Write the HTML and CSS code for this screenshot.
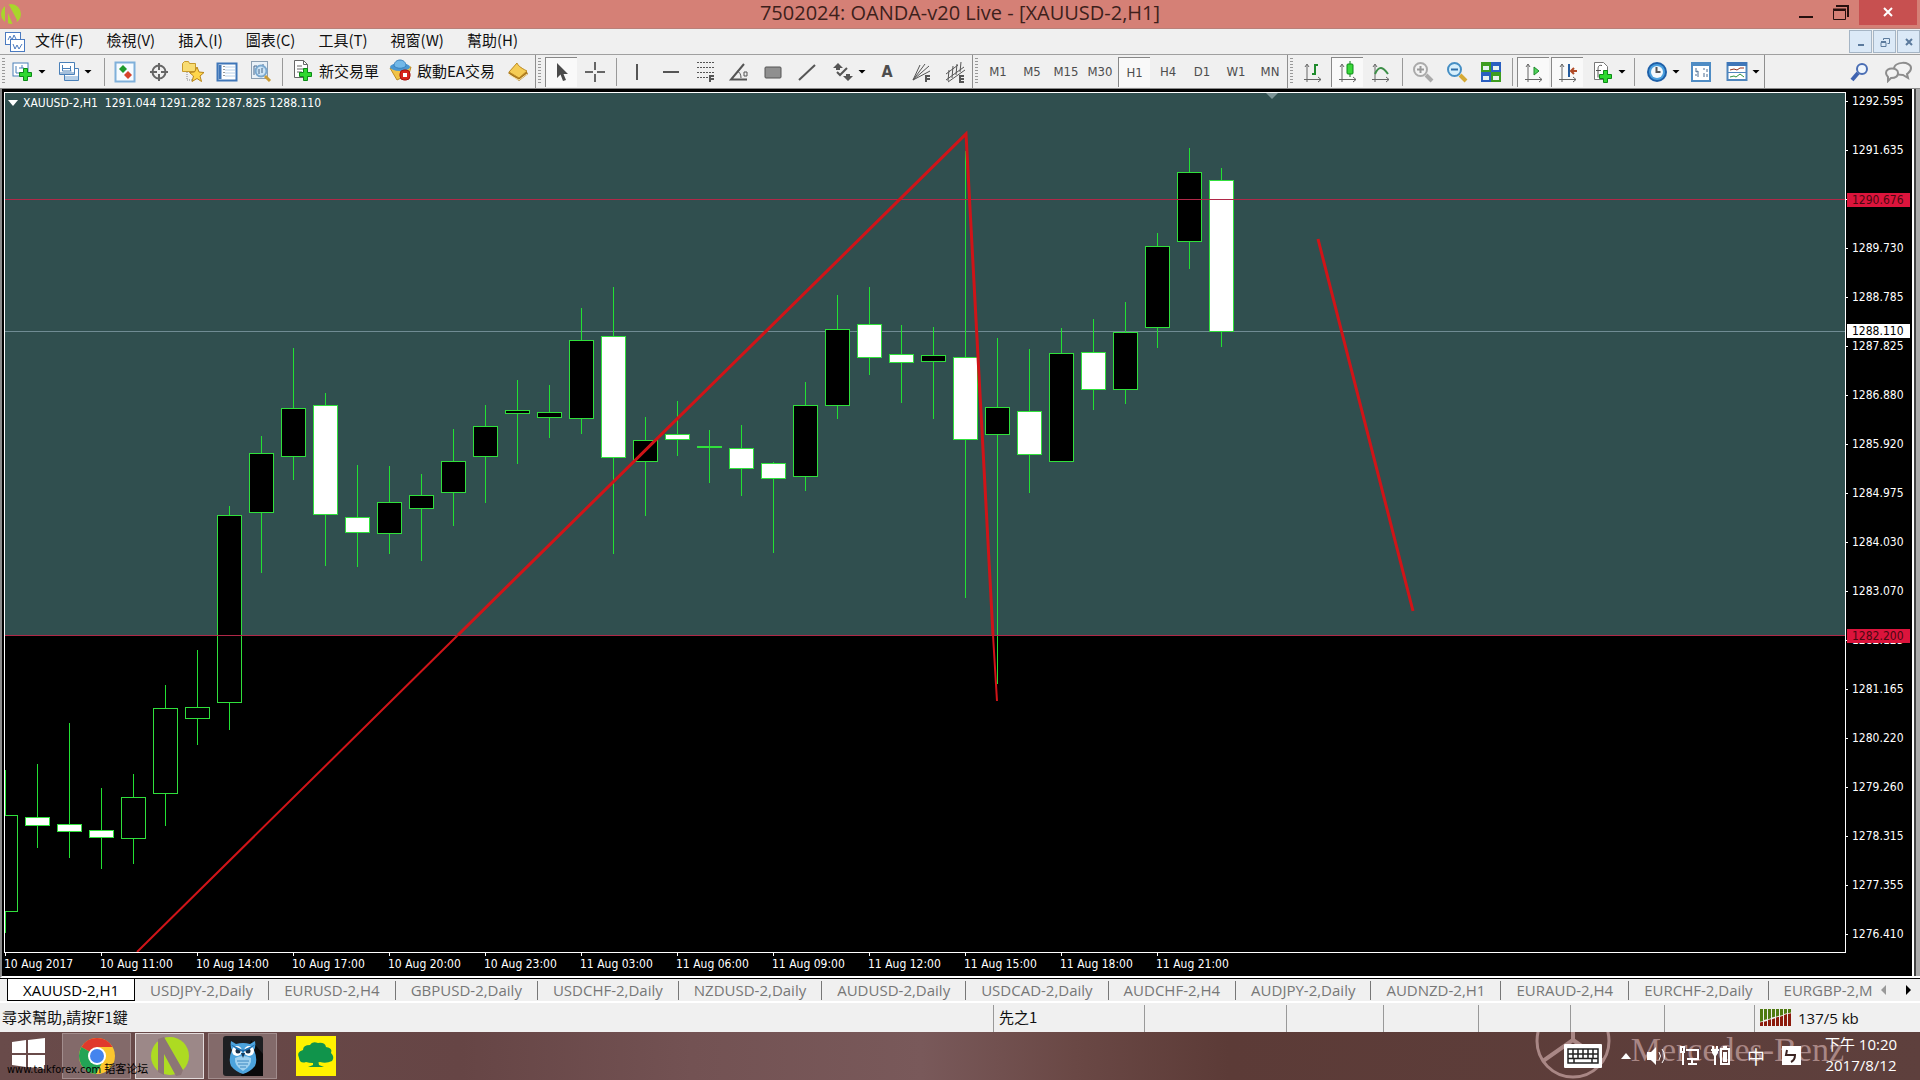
FILE: index.html
```html
<!DOCTYPE html>
<html lang="zh-Hant">
<head>
<meta charset="utf-8">
<title>7502024: OANDA-v20 Live - [XAUUSD-2,H1]</title>
<link rel="stylesheet" href="styles.css">
</head>
<body>
<header class="titlebar">
  <svg class="app-logo" width="22" height="22" viewBox="0 0 22 22"><circle cx="11" cy="11" r="10" fill="#a9d52b"/><path d="M5 1l3-1 9 17-1 4-3 1L8 10v11l-3-1z" fill="#d58076"/></svg>
  <h1 class="title">7502024: OANDA-v20 Live - [XAUUSD-2,H1]</h1>
  <div class="win-buttons">
    <button class="win-btn" aria-label="Minimize"><svg width="16" height="16"><path d="M2 12h14" stroke="#26100e" stroke-width="2"/></svg></button>
    <button class="win-btn" aria-label="Restore"><svg width="16" height="16" fill="none" stroke="#26100e"><path d="M.5 5.500h12v9H.5z"/><path d="M0 4.500h13" stroke-width="2"/><path d="M3 1h12v11" stroke-width="2"/></svg></button>
    <button class="win-btn win-close" aria-label="Close"><svg width="12" height="12"><path d="M2 1l8 8M10 1l-8 8" stroke="#fff" stroke-width="2"/></svg></button>
  </div>
</header>

<nav class="menubar">
  <svg class="menu-icon" width="20" height="20" fill="#fff" stroke="#4a7ac0"><rect x=".5" y=".5" width="15" height="12"/><path d="M3 8l2-4 2 4 2-5 2 4" fill="none"/><rect x="5.500" y="7.500" width="14" height="12"/><path d="M8 12l2 5 2-4 2 4 3-5" fill="none"/></svg>
  <div class="menus">
    <button class="menu">文件(F)</button>
    <button class="menu">檢視(V)</button>
    <button class="menu">插入(I)</button>
    <button class="menu">圖表(C)</button>
    <button class="menu">工具(T)</button>
    <button class="menu">視窗(W)</button>
    <button class="menu">幫助(H)</button>
  </div>
  <div class="mdi-buttons">
    <button class="mdi" aria-label="Minimize chart"><svg width="10" height="10"><path d="M2 8h6" stroke="#5b7a9d" stroke-width="2"/></svg></button>
    <button class="mdi" aria-label="Restore chart"><svg width="10" height="10" fill="none" stroke="#5b7a9d"><path d="M1 5.500h5v4H1zM1 4.500h5M3.500 3V1.500h6v5H7.500"/></svg></button>
    <button class="mdi" aria-label="Close chart"><svg width="10" height="10"><path d="M2 2l6 6M8 2l-6 6" stroke="#5b7a9d" stroke-width="2"/></svg></button>
  </div>
</nav>

<div class="toolbar">
  <div class="tools">
    <span class="grip"></span>
    <button class="tool split first" aria-label="New chart"><svg width="22" height="22"><rect x="1" y="2" width="15" height="13" fill="#fff" stroke="#4a80b8"/><path d="M4 5v7h8M10 4v3M7 7h5" stroke="#4a80b8" fill="none"/><path d="M11.500 7.500h4v4h4v4h-4v4h-4v-4h-4v-4h4z" fill="#2fd82f" stroke="#0b8a16"/></svg><i class="caret"></i></button>
    <button class="tool split first" aria-label="Profiles"><svg width="22" height="22" fill="#fff" stroke="#4a80b8"><path d="M6.500 7.500h14v12h-14z"/><path d="M7 18h13M7 16h13" stroke="#6fa0d0"/><path d="M1.500 1.500h15v12h-15z"/><path d="M4.500 4v6h9M4 7.500h8M12.500 5v5M2 12h14" fill="none"/></svg><i class="caret"></i></button>
    <span class="sep"></span>
    <button class="tool" aria-label="Market watch"><svg width="22" height="22"><rect x="1.500" y="1.500" width="19" height="19" fill="#f6fbff" stroke="#7fb0da" stroke-width="2"/><path d="M9 4l4 4-4 4-4-4z" fill="#1f9b2c"/><path d="M14 10l4 4-4 4-4-4z" fill="#d7432a"/></svg></button>
    <button class="tool" aria-label="Data window"><svg width="22" height="22" fill="none" stroke="#666" stroke-width="2"><circle cx="11" cy="11" r="6.500"/><path d="M11 2v7M11 13v7M2 11h7M13 11h7"/></svg></button>
    <button class="tool" aria-label="Navigator"><svg width="24" height="24"><path d="M1.500 3.500l2-2h4l1 2h6v8h-13z" fill="#f8dc72" stroke="#c79a2c"/><path d="M6 12v8h5" stroke="#888" stroke-dasharray="1 1" fill="none"/><path d="M16 7l2 5 5 .5-4 3.500 1.500 5.500L16 18.500 11 21.500l1.500-5.500-4-3.500 5-.5z" fill="#ffd64a" stroke="#b88417"/></svg></button>
    <button class="tool" aria-label="Terminal"><svg width="22" height="22"><rect x="1.500" y="2.500" width="19" height="17" fill="#fff" stroke="#3f76b8" stroke-width="2"/><path d="M4 4v14" stroke="#3f76b8" stroke-width="3"/><path d="M9 6h10M9 9h10M9 12h10M9 15h10" stroke="#b9d2ea"/><path d="M8 5v11" stroke="#333" stroke-dasharray="1 2"/></svg></button>
    <button class="tool" aria-label="Strategy tester"><svg width="24" height="24"><rect x="2.500" y="1.500" width="16" height="17" fill="#e9f1f8" stroke="#8c9fb2"/><path d="M5 15V6h3v6M14 4v5" stroke="#47678b" fill="none"/><circle cx="12" cy="11" r="5.500" fill="#c5e2f6" fill-opacity=".8" stroke="#7aa8cf" stroke-width="2"/><path d="M10 9v5M13 8v5" stroke="#47678b"/><path d="M16 16l5 5" stroke="#c99b37" stroke-width="3"/></svg></button>
    <span class="sep"></span>
    <button class="tool labelled order"><svg width="22" height="22"><path d="M2.500 1.500h9l4 4v13h-13z" fill="#fff" stroke="#666"/><path d="M11.500 1.500v4h4M5 7h5M5 10h7M5 13h5" stroke="#666" fill="none"/><path d="M11.500 9.500h4v4h4v4h-4v4h-4v-4h-4v-4h4z" fill="#2fd82f" stroke="#0b8a16"/></svg>新交易單</button>
    <button class="tool labelled expert"><svg width="23" height="22"><path d="M1 9l7 12 12-6 2-7z" fill="#f1c347" stroke="#bf8d22"/><ellipse cx="11" cy="8" rx="10" ry="4" fill="#4a97d2"/><path d="M5 7c0-8 12-8 12 0-3 3-9 3-12 0z" fill="#72b8e8" stroke="#3b82bd"/><rect x="11" y="11" width="10" height="10" rx="4" fill="#d8231c" stroke="#a5110c"/><path d="M14 14h4v4h-4z" fill="#fff"/></svg>啟動EA交易</button>
    <button class="tool" aria-label="MetaEditor"><svg width="22" height="22"><path d="M1 12l9-9 2 2 8 6 1 2-9 7z" fill="#a8741a"/><path d="M2 11l8-9c1 2 2 4 10 8l-8 7z" fill="#f5cc55" stroke="#bd8c25"/><path d="M2 14l10 5 8-6" stroke="#fbe7a4" fill="none"/></svg></button>
  </div>
  <div class="tools">
    <span class="grip"></span>
    <button class="tool pressed" aria-label="Cursor"><svg width="22" height="22"><path d="M6 2v15l3.500-3.500L12 20l3-1-2.500-6H17z" fill="#4a4a4a"/></svg></button>
    <button class="tool" aria-label="Crosshair"><svg width="22" height="22"><path d="M11 1v8M11 13v8M1 11h8M13 11h8" stroke="#666" stroke-width="2"/></svg></button>
    <span class="sep"></span>
    <button class="tool" aria-label="Vertical line"><svg width="22" height="22"><path d="M11 3v16" stroke="#555" stroke-width="2"/></svg></button>
    <button class="tool" aria-label="Horizontal line"><svg width="22" height="22"><path d="M3 11h16" stroke="#555" stroke-width="2"/></svg></button>
    <button class="tool" aria-label="Fibonacci retracement"><svg width="22" height="22" fill="none" stroke="#555"><path d="M3 1.500h17M3 6.500h17M3 11.500h17M3 16.500h11" stroke-dasharray="2 1"/><path d="M16 21v-6h4M16 18h4" stroke-width="2"/></svg></button>
    <button class="tool" aria-label="Angle"><svg width="22" height="22" fill="none" stroke="#555"><path d="M16 3L3 18.500h16" stroke-width="2"/><path d="M9 10c3 1 4 4 4 7M16 11h3v4h-3z"/></svg></button>
    <button class="tool" aria-label="Rectangle"><svg width="22" height="22"><rect x="3" y="6" width="16" height="11" rx="1" fill="#8f8f8f" stroke="#555"/></svg></button>
    <button class="tool" aria-label="Trend line"><svg width="22" height="22"><path d="M3 19L19 4" stroke="#555" stroke-width="2"/></svg></button>
    <button class="tool split" aria-label="Arrows"><svg width="22" height="22" fill="#555"><path d="M6 2l5 5H8v2H4V7H1zM16 20l-5-5h3v-2h4v2h3z"/><path d="M5 11l3 3 7-7" fill="none" stroke="#555" stroke-width="2"/></svg><i class="caret"></i></button>
    <button class="tool letter">A</button>
    <button class="tool" aria-label="Fibonacci fan"><svg width="22" height="22" fill="none" stroke="#555"><path d="M3 19L10 4M3 19L15 3M3 19L19 5M3 19L20 10" stroke-width="1"/><path d="M16 21v-6h4M16 18h4" stroke-width="2"/></svg></button>
    <button class="tool" aria-label="Equidistant channel"><svg width="22" height="22" fill="none" stroke="#555"><path d="M2 13L14 4M2 19L20 6M5 9l-1 11M9 5L8 17M13 3l-1 11M17 1l-1 10M4 21L21 9" stroke-width="1"/><path d="M20 15h-4v6h4M16 18h4" stroke-width="2"/></svg></button>
  </div>
  <div class="tools">
    <span class="grip"></span>
    <button class="tool">M1</button><button class="tool">M5</button><button class="tool">M15</button><button class="tool">M30</button><button class="tool pressed">H1</button><button class="tool">H4</button><button class="tool">D1</button><button class="tool">W1</button><button class="tool">MN</button>
  </div>
  <div class="tools">
    <span class="grip"></span>
    <button class="tool" aria-label="Bar chart"><svg width="22" height="22" fill="none" stroke="#666"><path d="M5 4v17M2 18.500h17M3 6l2-3 2 3M16 16l3 2.500-3 2.500"/><path d="M13 3v11M13 4h3M10 13h3" stroke="#1f8b2c" stroke-width="2"/></svg></button>
    <button class="tool pressed" aria-label="Candlesticks"><svg width="22" height="22" fill="none" stroke="#666"><path d="M5 4v17M2 18.500h17M3 6l2-3 2 3M16 16l3 2.500-3 2.500"/><path d="M13 0v16" stroke="#0b7a16"/><rect x="10" y="3" width="6" height="10" rx="1" fill="#3ad83a" stroke="#0b8a16"/></svg></button>
    <button class="tool" aria-label="Line chart"><svg width="22" height="22" fill="none" stroke="#666"><path d="M5 4v17M2 18.500h17M3 6l2-3 2 3M16 16l3 2.500-3 2.500"/><path d="M5 13c4-9 8-7 13 0" stroke="#3d8f48" stroke-width="2"/></svg></button>
    <span class="sep"></span>
    <button class="tool" aria-label="Zoom in"><svg width="22" height="22" fill="none"><path d="M14 14l6 6" stroke="#aaa" stroke-width="4"/><circle cx="8.500" cy="8.500" r="6.500" fill="#f3f3f3" stroke="#aaa" stroke-width="2"/><path d="M5 8.500h7M8.500 5v7" stroke="#999" stroke-width="2"/></svg></button>
    <button class="tool" aria-label="Zoom out"><svg width="22" height="22" fill="none"><path d="M14 14l6 6" stroke="#d5a934" stroke-width="4"/><circle cx="8.500" cy="8.500" r="6.500" fill="#d6effc" stroke="#468fc4" stroke-width="2"/><path d="M5 8.500h7" stroke="#2f6ea8" stroke-width="2"/></svg></button>
    <button class="tool" aria-label="Tile windows"><svg width="22" height="22"><path d="M1 1h10v10H1zM11 11h10v10H11z" fill="#3d9c1f"/><path d="M11 1h10v10H11zM1 11h10v10H1z" fill="#2a5fc0"/><path d="M3 5h6v4H3zM13 5h6v4h-6zM3 15h6v4H3zM13 15h6v4h-6z" fill="#e6f3f0"/></svg></button>
    <span class="sep"></span>
    <button class="tool pressed" aria-label="Auto scroll"><svg width="22" height="22" fill="none" stroke="#666"><path d="M5 3v18M2 18.500h17M3 6l2-3 2 3M16 16l3 2.500-3 2.500"/><path d="M11 6v8l5-4z" fill="#4fd35a" stroke="#1f8b2c"/></svg></button>
    <button class="tool pressed" aria-label="Chart shift"><svg width="22" height="22" fill="none" stroke="#666"><path d="M5 3v18M2 18.500h17M3 6l2-3 2 3M16 16l3 2.500-3 2.500"/><path d="M12 3v13" stroke="#245b9e" stroke-width="2"/><path d="M20 10h-6M17 7l-3 3 3 3" stroke="#b04a26" stroke-width="2"/></svg></button>
    <button class="tool split" aria-label="Indicators"><svg width="22" height="22"><path d="M2.500 1.500h9l4 4v13h-13z" fill="#fff" stroke="#777"/><path d="M10 4.500c-4-1-4 2-4 5v7M4 9.500h5" stroke="#555" fill="none"/><path d="M11.500 9.500h4v4h4v4h-4v4h-4v-4h-4v-4h4z" fill="#2fd82f" stroke="#0b8a16"/></svg><i class="caret"></i></button>
    <span class="sep"></span>
    <button class="tool split" aria-label="Periods"><svg width="22" height="22"><circle cx="11" cy="11" r="10" fill="#1d5fa8"/><circle cx="11" cy="11" r="8" fill="#4ba0de"/><circle cx="11" cy="11" r="6" fill="#f4f9fc"/><path d="M10.500 6v5h4" stroke="#555" fill="none" stroke-width="2"/></svg><i class="caret"></i></button>
    <button class="tool" aria-label="Period converter"><svg width="22" height="22"><rect x="2" y="2" width="18" height="18" fill="#fff" stroke="#4f8cc4" stroke-width="2"/><path d="M2 4h18" stroke="#4f8cc4" stroke-width="2"/><path d="M6 7v4l2-1v6M5 14h2M14 7v2M17 8v3M14 12v4M17 13v3" stroke="#4a6c92" fill="none"/></svg></button>
    <button class="tool split" aria-label="Templates"><svg width="22" height="22"><rect x="1.500" y="2" width="19" height="17" fill="#fff" stroke="#4f86bd" stroke-width="2"/><path d="M1 3h20" stroke="#3f76b8" stroke-width="4"/><path d="M2 11.500h18" stroke="#4f86bd"/><path d="M4 9l4-1 3 1 3-2 4 0" stroke="#93301c" fill="none"/><path d="M4 16l4-1 2 1 4-3 4 3" stroke="#2f9440" fill="none"/></svg><i class="caret"></i></button>
  </div>
  <div class="tools-right">
    <button class="tool" aria-label="Search"><svg width="20" height="20"><path d="M8 11l-6 7" stroke="#3f63b0" stroke-width="4"/><circle cx="12" cy="7" r="5" fill="#f0f6fc" stroke="#4a6eb4" stroke-width="2"/></svg></button>
    <button class="tool" aria-label="Chat"><svg width="28" height="22" fill="#f2f2f2" stroke="#8d8d8d" stroke-width="2"><path d="M10 8c0-8 17-8 17-1 0 4-3 5-4 6l1 4-5-3c-6 0-9-2-9-6z"/><path d="M2 12c0-6 12-6 12 0 0 4-4 5-7 5l-3 3v-4c-1-1-2-2-2-4z"/></svg></button>
  </div>
</div>

<main class="chart">
  <section class="plot">
    <svg class="canvas" id="canvas" aria-label="XAUUSD-2 H1"></svg>
    <p class="ohlc"><i class="caret light"></i>XAUUSD-2,H1&nbsp; 1291.044 1291.282 1287.825 1288.110</p>
  </section>
  <aside class="prices">
    <ol class="scale">
      <li>1292.595</li><li>1291.635</li><li>1290.675</li><li>1289.730</li><li>1288.785</li><li>1287.825</li><li>1286.880</li><li>1285.920</li><li>1284.975</li><li>1284.030</li><li>1283.070</li><li>1282.125</li><li>1281.165</li><li>1280.220</li><li>1279.260</li><li>1278.315</li><li>1277.355</li><li>1276.410</li>
    </ol>
    <span class="tag upper">1290.676</span>
    <span class="tag current">1288.110</span>
    <span class="tag lower">1282.200</span>
  </aside>
  <ol class="times">
    <li>10 Aug 2017</li><li>10 Aug 11:00</li><li>10 Aug 14:00</li><li>10 Aug 17:00</li><li>10 Aug 20:00</li><li>10 Aug 23:00</li><li>11 Aug 03:00</li><li>11 Aug 06:00</li><li>11 Aug 09:00</li><li>11 Aug 12:00</li><li>11 Aug 15:00</li><li>11 Aug 18:00</li><li>11 Aug 21:00</li>
  </ol>
</main>

<nav class="tabs">
  <div class="tab-list">
    <button class="tab active">XAUUSD-2,H1</button><button class="tab">USDJPY-2,Daily</button><button class="tab">EURUSD-2,H4</button><button class="tab">GBPUSD-2,Daily</button><button class="tab">USDCHF-2,Daily</button><button class="tab">NZDUSD-2,Daily</button><button class="tab">AUDUSD-2,Daily</button><button class="tab">USDCAD-2,Daily</button><button class="tab">AUDCHF-2,H4</button><button class="tab">AUDJPY-2,Daily</button><button class="tab">AUDNZD-2,H1</button><button class="tab">EURAUD-2,H4</button><button class="tab">EURCHF-2,Daily</button><button class="tab">EURGBP-2,M</button>
  </div>
  <button class="tab-scroll" aria-label="Scroll left"><svg width="6" height="10"><path d="M5 0v10L0 5z" fill="#999"/></svg></button>
  <button class="tab-scroll" aria-label="Scroll right"><svg width="6" height="10"><path d="M1 0v10l5-5z" fill="#000"/></svg></button>
</nav>

<div class="status">
  <span>尋求幫助,請按F1鍵</span>
  <span>先之1</span>
  <span></span><span></span><span></span><span></span><span></span><span></span>
  <span class="traffic"><svg width="32" height="17" viewBox="0 0 32 20" preserveAspectRatio="none"><path d="M0 0h3v14l-3 1zM4 0h3v12l-3 1zM8 0h3v11l-3 1zM12 0h3v9l-3 1zM16 0h3v8l-3 1zM20 0h3v7l-3 1zM24 0h3v5l-3 1zM28 0h3v4l-3 1z" fill="#4f7a10"/><path d="M0 16l3-1v5H0zM4 15l3-1v6H4zM8 13l3-1v8H8zM12 12l3-1v9h-3zM16 10l3-1v11h-3zM20 9l3-1v12h-3zM24 7l3-1v14h-3zM28 6l3-1v15h-3z" fill="#8c1a0c"/></svg>137/5 kb</span>
</div>

<footer class="taskbar">
  <button class="start" aria-label="Start"><svg width="34" height="32" fill="#fff"><path d="M0 4l14-2v13H0zM16 2l17-2v15H16zM0 17h14v12L0 27zM16 17h17v14l-17-2z"/></svg></button>
  <button class="task" aria-label="Chrome"><svg width="38" height="38" viewBox="0 0 38 38"><circle cx="19" cy="19" r="18" fill="#fbc62e"/><path d="M19 19L3.400 10A18 18 0 0 1 34.600 10H19z" fill="#e0392c"/><path d="M3.400 10A18 18 0 0 0 18 37l7-13-6-5z" fill="#23a455"/><circle cx="19" cy="19" r="9" fill="#fff"/><circle cx="19" cy="19" r="7" fill="#4484ee"/></svg></button>
  <button class="task active" aria-label="MetaTrader"><svg width="40" height="40" viewBox="0 0 40 40"><circle cx="20" cy="20" r="19" fill="#addb22"/><path d="M8 3l6-2 19 33-2 5-5 1L14 18v21l-6-3z" fill="#8c7576"/></svg></button>
  <button class="task" aria-label="Owl"><svg width="40" height="40" viewBox="0 0 40 40"><rect width="40" height="40" rx="3" fill="#1e1f22"/><path d="M28 4l12 14v22H18z" fill="#0a0a0b"/><path d="M8 5l5 3q7-2 14 0l5-3q1 6-1 9 4 9 1 16-5 6-12 8-7-2-12-8-3-7 1-16-2-3-1-9z" fill="#4ca3dd"/><path d="M12 22q8-4 16 0 1 8-8 13-9-5-8-13z" fill="#9fd0ef"/><path d="M14 25h12M15 28h10M17 31h6" stroke="#3a86c0"/><circle cx="14" cy="15" r="5" fill="#fff"/><circle cx="26" cy="15" r="5" fill="#fff"/><circle cx="15" cy="15" r="2.500" fill="#16304a"/><circle cx="25" cy="15" r="2.500" fill="#16304a"/><path d="M7 8l13 6 13-6-6 5-7 3-7-3z" fill="#1f6fae"/><path d="M18 17h4l-2 5z" fill="#183a58"/></svg></button>
  <button class="task tree" aria-label="Tree"><svg width="40" height="40" viewBox="0 0 40 40"><rect width="40" height="40" fill="#fff200"/><path d="M3 22q-3-6 4-8 0-5 7-5 2-4 8-2 7-1 8 4 7 1 5 6 4 4 1 8-6 3-12 1-8 2-14 0-6 2-7-4z" fill="#10944b"/><path d="M17 24h5l1 5 5 2H12l5-2z" fill="#10944b"/></svg></button>
  <span class="watermark">www.talkforex.com 韬客论坛</span>
  <div class="wallpaper">
    <svg width="76" height="48" fill="none" stroke="#a98785" stroke-width="3"><circle cx="38" cy="9" r="36"/><path d="M38-20v28L8 29M38 8l30 21" stroke-width="4"/></svg>
    <span>Mercedes-Benz</span>
  </div>
  <div class="tray">
    <svg width="38" height="24"><rect width="38" height="24" rx="1" fill="#fff"/><path d="M4 5h30v14H4zM4 10h30M4 14.500h30M9 5v9M14 5v9M19 5v9M24 5v9M29 5v9M10 15v4M28 15v4" fill="none" stroke="#222" stroke-width="1.500"/></svg>
    <svg class="up" width="10" height="6"><path d="M5 0l5 6H0z" fill="#fff"/></svg>
    <svg width="20" height="20"><path d="M0 6h4l5-5v18l-5-5H0z" fill="#fff"/><path d="M12 6q3 4 0 8M15 3q5 7 0 14" fill="none" stroke="#fff"/></svg>
    <svg width="20" height="20" fill="none" stroke="#fff" stroke-width="2"><path d="M7 4h12v9H8M13 13v4M9 18h9M4 7v12M2 1h3v5H2z"/></svg>
    <svg width="20" height="20" fill="none" stroke="#fff" stroke-width="2"><path d="M4 10v9M0 4h8M2 0v4M6 0v4"/><path d="M1 4h6v3L5 10H3L1 7z" fill="#fff" stroke="none"/><path d="M10 3h8v15h-8zM12 1h4"/><path d="M12 6h4v10h-4z" fill="#fff" stroke="none"/></svg>
    <span class="ime">中</span>
    <svg width="20" height="20"><rect width="19" height="19" fill="#fff"/><path d="M5 4l-1 5h9q0 5-4 7" fill="none" stroke="#3a2422" stroke-width="2"/></svg>
  </div>
  <time class="clock"><span>下午 10:20</span><span>2017/8/12</span></time>
</footer>
<script src="chart.js"></script>
</body>
</html>
```
FILE: styles.css
```css
* { box-sizing: border-box; }
body {
  margin: 0;
  min-height: 100vh;
  display: flex;
  flex-direction: column;
  overflow-x: hidden;
  background: #f0f0f0;
  color: #111;
  font-family: "Open Sans", "Noto Sans CJK TC", sans-serif;
  font-size: 16px;
}
button { margin: 0; padding: 0; border: 0; background: none; font: inherit; color: inherit; }
svg { display: block; flex: none; }
ol { list-style: none; margin: 0; padding: 0; }

/* title bar */
.titlebar { position: relative; display: flex; height: 29px; justify-content: center; background: #d58076; border-bottom: 1px solid #b98079; }
.app-logo { position: absolute; left: 0; top: 3px; }
.title { margin: 0; font-size: 20px; font-weight: 400; line-height: 26px; color: #3d1f1c; }
.win-buttons { position: absolute; right: 3px; top: 0; display: flex; }
.win-btn { display: flex; width: 36px; height: 25px; align-items: center; justify-content: center; }
.win-close { width: 58px; background: #c75050; }

/* menu */
.menubar { display: flex; height: 26px; align-items: center; padding-left: 5px; border-bottom: 1px solid #a0a0a0; }
.menu-icon { margin-right: 10px; }
.menus { display: flex; gap: 23px; padding-bottom: 3px; }
.menu { font-family: "Noto Sans CJK TC", sans-serif; font-size: 15px; line-height: 20px; }
.mdi-buttons { display: flex; gap: 1px; margin-left: auto; }
.mdi { display: flex; width: 23px; height: 23px; align-items: center; justify-content: center; background: #dbe9f7; border: 1px solid #a5b5c5; }

/* toolbars */
.toolbar { display: flex; height: 34px; border-bottom: 1px solid #8a8a8a; }
.tools { display: flex; align-items: center; border-right: 1px solid #8f8f8f; }
.grip { width: 3px; height: 27px; margin: 0 3px 0 2px; background: repeating-linear-gradient(#999 0 1px, #f0f0f0 1px 3px); }
.sep { width: 8px; height: 28px; background: linear-gradient(#999, #999) center / 1px 100% no-repeat; }
.tool { display: flex; width: 34px; height: 30px; align-items: center; justify-content: center; color: #4d4d4d; font-family: "DejaVu Sans Condensed", "DejaVu Sans", sans-serif; font-size: 13px; }
.pressed { width: 32px; margin: 0 1px; background: #f9f9f9; border-top: 1px solid #888; border-left: 1px solid #888; }
.split { width: 46px; justify-content: flex-start; gap: 4px; padding-left: 8px; }
.split.first { padding-left: 4px; }
.labelled { justify-content: flex-start; gap: 5px; padding: 0 0 3px 6px; color: #111; font-family: "Noto Sans CJK TC", sans-serif; font-size: 15px; white-space: nowrap; }
.order { width: 97px; }
.expert { width: 118px; }
.letter { font-weight: 700; font-size: 16px; }
.caret { flex: none; width: 8px; height: 4px; background: #000; clip-path: polygon(0 0, 100% 0, 50% 100%); }
.tools-right { display: flex; align-items: center; gap: 4px; margin-left: auto; padding-right: 5px; }

/* chart */
.chart {
  flex: 1 0 auto;
  display: grid;
  grid-template: 1fr 23px / 1fr 66px;
  padding: 3px 8px 0 2px;
  background: linear-gradient(90deg, #fff 0 2px, #444 2px 4px, #aaa 4px) right / 8px 100% no-repeat, #000;
  border-left: 2px solid #8a8a8a;
  border-bottom: 2px solid #fff;
  color: #fff;
  font-family: "DejaVu Sans Condensed", "DejaVu Sans", sans-serif;
  font-size: 12px;
}
.plot { position: relative; min-height: 861px; border: 1px solid #fff; overflow: hidden; }
.canvas { position: absolute; inset: 0; width: 100%; height: 100%; }
.ohlc { position: relative; display: flex; align-items: center; gap: 5px; margin: 1px 0 0 3px; line-height: 18px; }
.light { width: 10px; height: 6px; background: #fff; }
.prices { position: relative; }
.scale { overflow: hidden; height: 861px; }
.scale li { display: flex; align-items: center; gap: 4px; height: 18px; margin-bottom: 31px; }
.scale li::before { content: ""; width: 2px; height: 1px; background: #fff; }
.tag { position: absolute; left: 1px; width: 63px; height: 14px; padding-left: 5px; line-height: 14px; background: #dc143c; color: #4a0810; }
.upper { top: 101px; }
.current { top: 232px; background: #fff; color: #000; }
.lower { top: 537px; }
.times { display: flex; }
.times li { position: relative; flex: none; width: 96px; line-height: 22px; white-space: nowrap; }
.times li::before { content: ""; position: absolute; left: 1px; top: 0; width: 1px; height: 3px; background: #fff; }

/* chart tabs */
.tabs { display: flex; height: 25px; align-items: flex-start; border-top: 1px solid #000; border-bottom: 2px solid #fff; }
.tab-list { display: flex; flex: 1 1 0; min-width: 0; overflow: hidden; padding-left: 7px; }
.tab { flex: none; height: 19px; margin-top: 2px; padding: 0 15px; border-right: 1px solid #777; color: #777; font-size: 15px; line-height: 17px; }
.tab.active { height: 22px; margin: 0; border: 1px solid #000; border-top: 0; background: #fff; color: #000; line-height: 20px; }
.tab:last-child { border: 0; padding-right: 0; }
.tab-scroll { display: flex; width: 24px; height: 22px; align-items: center; justify-content: center; }

/* status bar */
.status { display: grid; grid-template-columns: 1fr 151px 142px 97px 95px 92px 94px 90px 166px; height: 29px; padding-top: 2px; line-height: 24px; font-family: "Noto Sans CJK TC", sans-serif; font-size: 15px; }
.status span { padding-left: 5px; border-left: 1px solid #999; white-space: nowrap; }
.status span:first-child { padding-left: 2px; border-left: 0; }
.status .traffic { display: flex; align-items: center; gap: 6px; padding-bottom: 2px; font-family: "Open Sans", sans-serif; }

/* task bar */
.taskbar { position: relative; display: flex; height: 48px; align-items: center; overflow: hidden; background: linear-gradient(90deg, #694b4a, #664545 24%, #735253 36%, #79595a 48%, #6a4845 56%, #5c3b37 64%, #5e403d); }
.start { display: flex; width: 62px; padding: 0 0 4px 12px; }
.task { display: flex; width: 69px; height: 46px; margin-right: 4px; align-items: center; justify-content: center; background: #836a6a; border: 1px solid #a28d8d; }
.task.active { background: #9c8888; border-color: #e2dada; }
.task.tree { background: none; border: 0; }
.watermark { position: absolute; left: 7px; bottom: 2px; color: #000; font-family: "DejaVu Sans Condensed", "Noto Sans CJK SC", sans-serif; font-size: 11px; line-height: 16px; }
.wallpaper { position: absolute; right: 76px; top: 0; display: flex; gap: 20px; color: #a98785; font-family: "Liberation Serif", serif; font-size: 34px; line-height: 36px; }
.tray { position: relative; display: flex; gap: 12px; align-items: center; margin-left: auto; color: #fff; }
.up { margin: 0 4px 0 7px; }
.ime { margin: 0 5px 0 4px; font-family: "Noto Sans CJK TC", sans-serif; font-size: 18px; line-height: 20px; }
.clock { position: relative; display: flex; flex-direction: column; align-items: center; width: 118px; padding-bottom: 2px; color: #fff; font-family: "Open Sans", "Noto Sans CJK TC", sans-serif; font-size: 15px; line-height: 21px; }
```
FILE: chart.js
```js
// Each candle: high, body top, body bottom, low (plot pixels), bullish flag
const candles = [
  [770, 815, 911, 932, 1], [764, 817, 825, 847, 0], [723, 824, 831, 857, 0], [788, 830, 837, 868, 0],
  [774, 797, 838, 863, 1], [685, 708, 793, 825, 1], [650, 707, 718, 744, 1], [506, 515, 702, 729, 1],
  [436, 453, 512, 572, 1], [348, 408, 456, 479, 1], [393, 405, 514, 565, 0], [465, 517, 532, 566, 0],
  [466, 502, 533, 553, 1], [474, 495, 508, 560, 1], [429, 461, 492, 525, 1], [405, 426, 456, 502, 1],
  [380, 410, 413, 463, 1], [385, 412, 417, 437, 1], [308, 340, 418, 433, 1], [287, 336, 457, 553, 0],
  [417, 440, 461, 515, 1], [401, 434, 439, 455, 0], [430, 446, 447, 482, 0], [425, 448, 468, 495, 0],
  [462, 463, 478, 552, 0], [382, 405, 476, 490, 1], [295, 329, 405, 418, 1], [287, 324, 357, 374, 0],
  [325, 354, 362, 402, 0], [327, 355, 361, 418, 1], [151, 357, 439, 597, 0], [338, 407, 434, 683, 1],
  [349, 411, 454, 492, 0], [328, 353, 461, 461, 1], [319, 352, 389, 409, 0], [302, 332, 389, 403, 1],
  [233, 246, 327, 347, 1], [148, 172, 241, 268, 1], [168, 180, 331, 346, 0]
];
const svg = document.getElementById('canvas');
const add = (parent, name, attrs) => {
  const el = document.createElementNS('http://www.w3.org/2000/svg', name);
  for (const key in attrs) el.setAttribute(key, attrs[key]);
  return parent.appendChild(el);
};
// Data coordinates start at the window corner; the plot begins at (5, 93)
const layer = () => add(svg, 'g', { transform: 'translate(-5 -93)' });
const hline = (y, color) => add(svg, 'rect', { x: 0, y: y - 93, width: '100%', height: 1, fill: color });
const trend = (parent, d, width) => add(parent, 'path', { d, fill: 'none', stroke: '#d01418', 'stroke-width': width });

add(svg, 'rect', { width: '100%', height: 542, fill: '#304f4f' });
hline(331, '#708c94');
const body = layer();
add(body, 'path', { d: 'M1266 93h12l-6 6z', fill: '#7c9496' });
candles.forEach(([high, top, bottom, low, up], i) => {
  const x = 5 + 32 * i;
  add(body, 'rect', { x, y: high, width: 1, height: low - high + 1, fill: '#22e032' });
  add(body, 'rect', { x: x - 11.5, y: top + 0.5, width: 24, height: bottom - top, fill: up ? '#000' : '#fff', stroke: '#30e03c' });
});
hline(199, '#b02848');
hline(635, '#b02848');
const lines = layer();
trend(lines, 'M137 952L458 635M993 635L997 701', 2);
trend(lines, 'M458 635L966 134L993 635M1318 239L1413 611', 3);
```
